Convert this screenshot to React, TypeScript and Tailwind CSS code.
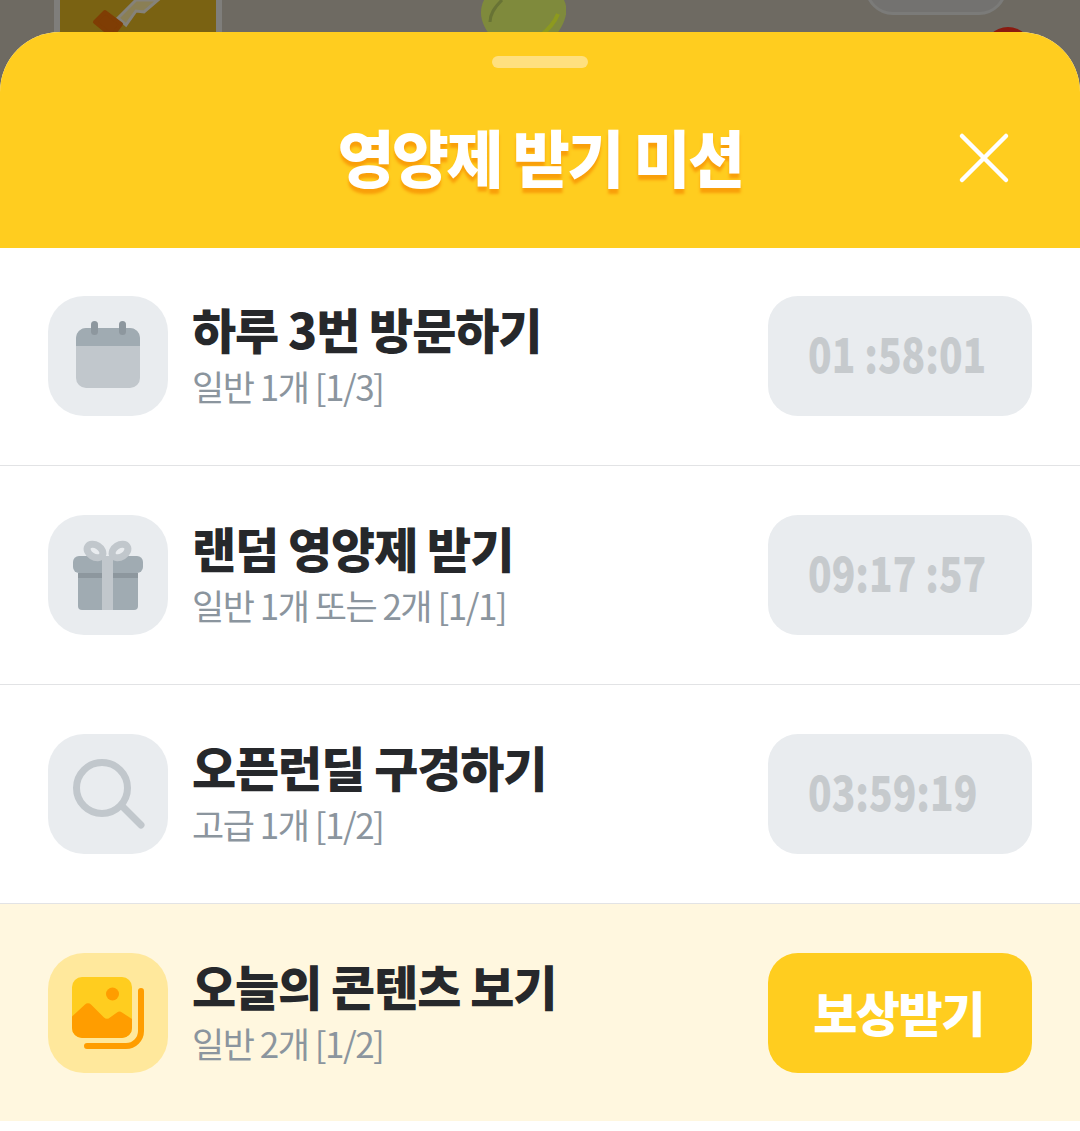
const kr = { fontFamily: '"Noto Sans CJK KR", sans-serif' };

function CalendarIcon() {
  return (
    <svg width="120" height="120" viewBox="0 0 120 120">
      <rect x="28" y="32" width="64" height="60" rx="10" fill="#c1c7cc" />
      <path d="M28 50V42a10 10 0 0 1 10-10h44a10 10 0 0 1 10 10v8z" fill="#a0abb2" />
      <rect x="43" y="25" width="7" height="14" rx="3.5" fill="#8d979e" />
      <rect x="71" y="25" width="7" height="14" rx="3.5" fill="#8d979e" />
    </svg>
  );
}

function GiftIcon() {
  return (
    <svg width="120" height="120" viewBox="0 0 120 120">
      <path d="M30 58h60v33a4 4 0 0 1-4 4H34a4 4 0 0 1-4-4z" fill="#a0abb2" />
      <rect x="30" y="58" width="60" height="5" fill="#8d979e" />
      <rect x="25" y="41" width="70" height="17" rx="6" fill="#a0abb2" />
      <rect x="54" y="41" width="11" height="54" fill="#c1c7cc" />
      <ellipse cx="47" cy="36" rx="8.500" ry="6" transform="rotate(32 47 36)" fill="none" stroke="#c1c7cc" strokeWidth="7" />
      <ellipse cx="72" cy="36" rx="8.500" ry="6" transform="rotate(-32 72 36)" fill="none" stroke="#c1c7cc" strokeWidth="7" />
    </svg>
  );
}

function SearchIcon() {
  return (
    <svg width="120" height="120" viewBox="0 0 120 120" fill="none" stroke="#c1c7cc">
      <circle cx="54" cy="54" r="25.500" strokeWidth="7" />
      <path d="M75 73l18 18" strokeWidth="7" strokeLinecap="round" />
    </svg>
  );
}

function PictureIcon() {
  return (
    <svg width="120" height="120" viewBox="0 0 120 120">
      <rect x="24" y="24" width="60" height="61" rx="10" fill="#ffcd1f" />
      <circle cx="64.500" cy="41" r="6.500" fill="#ff9d00" />
      <path d="M24 63.500L37 51.500a4 4 0 0 1 6 0L56 64.500a4 4 0 0 0 6 0L69 59.500a4 4 0 0 1 5 0L84 66V75a10 10 0 0 1-10 10H34a10 10 0 0 1-10-10z" fill="#ff9d00" />
      <path d="M93 38V78a15 15 0 0 1-15 15H39" fill="none" stroke="#ff9d00" strokeWidth="6" strokeLinecap="round" />
    </svg>
  );
}

const missions = [
  { title: '하루 3번 방문하기', sub: '일반 1개 [1/3]', time: '01 :58:01', icon: <CalendarIcon /> },
  { title: '랜덤 영양제 받기', sub: '일반 1개 또는 2개 [1/1]', time: '09:17 :57', icon: <GiftIcon /> },
  { title: '오픈런딜 구경하기', sub: '고급 1개 [1/2]', time: '03:59:19', icon: <SearchIcon /> },
];

export default function App() {
  return (
    <div className="relative h-[1131px] w-[1080px] overflow-hidden bg-white" style={kr}>
      {/* dimmed page behind the sheet */}
      <div className="absolute inset-x-0 top-0 h-[100px] bg-[#6e6a62]">
        <div className="absolute left-[54px] top-[-10px] h-[60px] w-[168px] border-x-[6px] border-[#7f7e7b] bg-[#7a6212]" />
        <svg className="absolute left-[90px] top-0" width="80" height="40" viewBox="0 0 80 40">
          <path d="M28 18L46 0h22L54 12l-8-1-10 14z" fill="#8a7f55" stroke="#85827a" strokeWidth="3" />
          <path d="M5 22l10-10 16 12-9 12z" fill="#7f3d04" stroke="#7f3d04" strokeWidth="4" strokeLinejoin="round" />
        </svg>
        <svg className="absolute left-[480px] top-0" width="86" height="40" viewBox="0 0 86 40">
          <path d="M4 0C-3 14 3 28 14 40h58C84 26 90 12 84 0z" fill="#7f8a3c" />
          <path d="M22 0C14 8 10 14 10 22" fill="none" stroke="#687335" strokeWidth="3" />
          <path d="M60 36c8-6 14-12 18-22" fill="none" stroke="#8d9a1e" strokeWidth="4" />
        </svg>
        <div className="absolute left-[865px] top-[-40px] h-[55px] w-[142px] rounded-b-[28px] border-[3px] border-[#7b7b79] bg-[#737270]" />
        <div className="absolute left-[983px] top-[27px] h-[50px] w-[50px] rounded-full bg-[#8a1a10]" />
      </div>

      <div className="relative mt-[32px] overflow-hidden rounded-t-[60px] bg-white">
        <header className="relative flex h-[216px] items-center justify-center bg-[#ffcd1f] pt-[32px]">
          <div className="absolute left-[492px] top-[24px] h-[12px] w-[96px] rounded-full bg-[#ffe07f]" />
          <h1 className="text-[62px] font-black leading-none tracking-[-2.500px] text-white [text-shadow:0_5px_3px_#f99f0a]">
            영양제 받기 미션
          </h1>
          <svg className="absolute left-[954px] top-[96px]" width="60" height="60" viewBox="0 0 60 60" fill="none" stroke="#fff" strokeWidth="4.500" strokeLinecap="round">
            <path d="M8 8l44 44M52 8L8 52" />
          </svg>
        </header>

        {missions.map((m) => (
          <div key={m.title} className="h-[219px] px-12 pt-12">
            <div className="flex h-[120px] items-center">
              <div className="h-[120px] w-[120px] shrink-0 rounded-[36px] bg-[#e9ecef]">{m.icon}</div>
              <div className="ml-6 flex-1 pb-[7px]">
                <div className="text-[48px] font-black leading-[64px] tracking-[-1.100px] text-[#26282b]">{m.title}</div>
                <div className="mt-[2px] text-[35px] font-normal leading-[48px] tracking-[-1.500px] text-[#8b959e]">{m.sub}</div>
              </div>
              <div className="flex h-[120px] w-[264px] items-center rounded-[30px] bg-[#e9ecef] pb-[8px] pl-10 text-[48px] font-black text-[#c6cacd]">
                <span className="origin-left scale-x-[0.81] whitespace-nowrap">{m.time}</span>
              </div>
            </div>
            <div className="-mx-12 mt-[49px] h-px bg-[#e2e3e5]" />
          </div>
        ))}

        <div className="-mt-[1px] h-[217px] bg-[#fff7df] px-12 pt-[49px]">
          <div className="flex h-[120px] items-center">
            <div className="h-[120px] w-[120px] shrink-0 rounded-[36px] bg-[#ffe89c]">
              <PictureIcon />
            </div>
            <div className="ml-6 flex-1 pb-[7px]">
              <div className="text-[48px] font-black leading-[64px] tracking-[-1.100px] text-[#26282b]">오늘의 콘텐츠 보기</div>
              <div className="mt-[2px] text-[35px] font-normal leading-[48px] tracking-[-1.500px] text-[#8b959e]">일반 2개 [1/2]</div>
            </div>
            <button className="flex h-[120px] w-[264px] items-center justify-center rounded-[30px] bg-[#ffcd1f] pb-[4px] pr-[3px] text-[48px] font-black tracking-[-1.500px] text-white">
              보상받기
            </button>
          </div>
        </div>
      </div>
    </div>
  );
}
